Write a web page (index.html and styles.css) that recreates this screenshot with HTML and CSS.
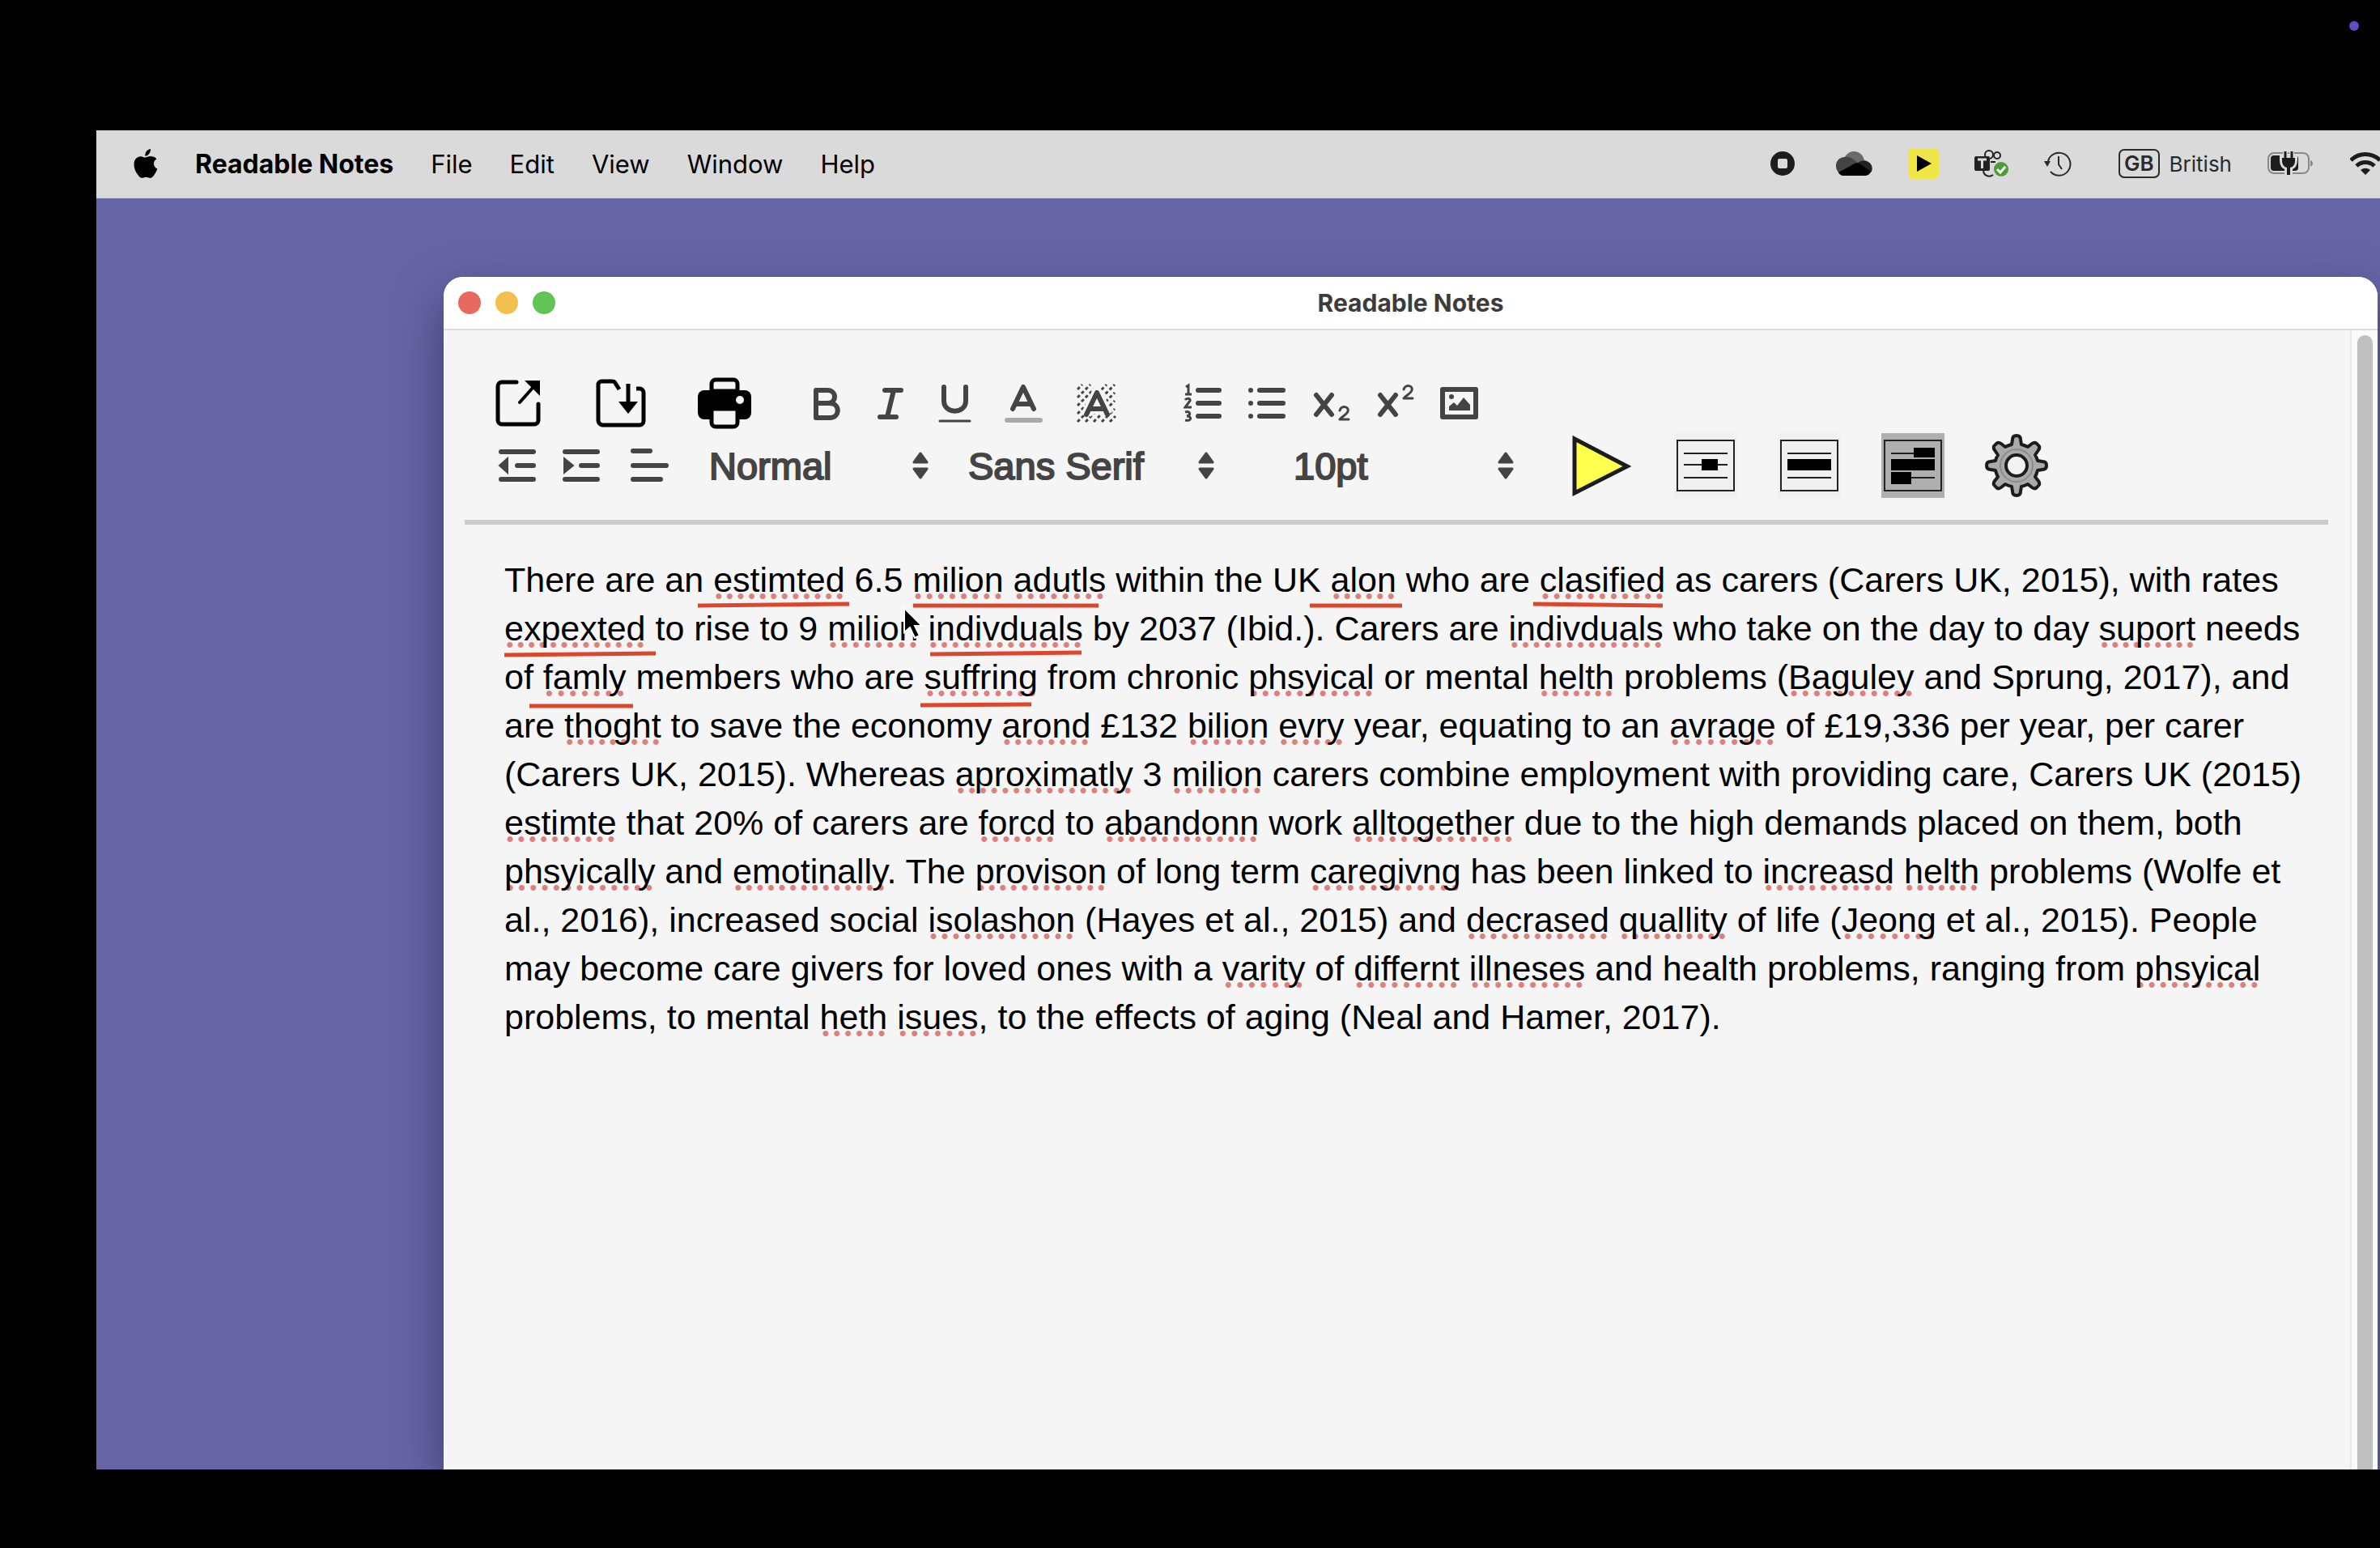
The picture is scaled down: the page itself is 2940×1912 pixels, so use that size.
FILE: index.html
```html
<!DOCTYPE html>
<html lang="en-GB">
<head>
<meta charset="utf-8">
<title>Readable Notes</title>
<link rel="stylesheet" href="styles.css">
</head>
<body>
<header class="stage-top"><span class="presence"></span></header>
<div class="desktop">
  <nav class="menubar" aria-label="Menu bar">
    <button class="apple" aria-label="Apple menu"><svg width="30" height="36" viewBox="0 0 30 36"><path d="M21 0c.3 3-1 5-2.300 6.500C17.300 8 15.600 8.700 14.300 8.500c-.2-2.500.8-4.700 2.200-6.200C17.700 1 19.600.1 21 0zM28.500 12.300c-2.300 1.400-3.500 3.200-3.500 5.900 0 3 1.800 5.200 4.300 6.200-1 3-2.600 6-4.500 8.500-1.400 1.800-2.700 2.900-4.500 2.900-1.900 0-2.500-1.100-4.900-1.100s-3.200 1.100-5 1.100c-2 0-3.400-1.500-4.800-3.500C2.300 28.500.5 23.500.5 19c0-6.300 4-9.800 8.200-9.800 2.300 0 4.200 1.400 5.700 1.400 1.400 0 3.600-1.600 6.400-1.600 3 0 5.800 1 7.700 3.300z"/></svg></button>
    <button class="app-name">Readable Notes</button>
    <button>File</button>
    <button>Edit</button>
    <button>View</button>
    <button>Window</button>
    <button>Help</button>
    <div class="status">
      <svg class="record" width="30" height="30" viewBox="0 0 30 30"><circle cx="15" cy="15" r="15" fill="#1c1c1c"/><rect x="9" y="9" width="12" height="12" rx="2" fill="#dadada"/></svg>
      <svg width="46" height="30" viewBox="0 0 46 30"><path d="M10 14C11 5 16 0 23 0c7 0 11 4 13 11l-14 9z" fill="#6a6a6a"/><path d="M4 26C-2 19 1 8 11 7c6-1 9 1 13 4l5 4-24 12z" fill="#444"/><path d="M28 14c4-3 9-4 13-1 5 3 6 9 3 13l-12-4z" fill="#222"/><path d="M4 26l20-11c2-1 4-1 6 0l14 10c-1 3-4 5-8 5H10c-3 0-5-2-6-4z"/></svg>
      <svg width="38" height="38" viewBox="0 0 38 38"><rect width="38" height="38" rx="6" fill="#f0e646"/><path d="M11 9l18 10-18 10z"/></svg>
      <svg width="42" height="34" viewBox="0 0 42 34"><g fill="none" stroke="#222" stroke-width="2"><circle cx="18" cy="6" r="5"/><circle cx="28" cy="7" r="4"/><path d="M20 15h6M11 26c1 7 8 8 12 5"/></g><rect y="8" width="19" height="18" rx="2" fill="#222"/><path d="M4 12h11M9.500 12v11" stroke="#dadada" stroke-width="3"/><circle cx="33" cy="24" r="9" fill="#4a9e33"/><path d="M28 24l4 4 6-7" fill="none" stroke="#fff" stroke-width="3"/></svg>
      <svg width="34" height="32" viewBox="0 0 34 32"><path d="M5 13A14 14 0 1 1 8 26" fill="none" stroke="#2a2a2a" stroke-width="2"/><path d="M0 13h8l-4 7z" fill="#2a2a2a"/><path d="M18 7v10l4 6" fill="none" stroke="#2a2a2a" stroke-width="2"/></svg>
      <span class="input-source"><span class="code">GB</span>British</span>
      <svg width="58" height="32" viewBox="0 0 58 32"><rect x="1" y="3" width="50" height="25" rx="7" fill="none" stroke="#888" stroke-width="2"/><path d="M53 12c4 1 4 6 0 8z" fill="#888"/><rect x="4" y="6" width="34" height="19" rx="4" fill="#1c1c1c"/><path d="M22 1v8M30 1v8M18 9h16v3c0 5-2 8-6 9v9h-4v-9c-4-1-6-4-6-9z" fill="#1c1c1c" stroke="#dadada" stroke-width="6"/><path d="M22 1v8M30 1v8" stroke="#1c1c1c" stroke-width="3"/><path d="M18 9h16v3c0 5-2 8-6 9v9h-4v-9c-4-1-6-4-6-9z" fill="#1c1c1c"/></svg>
      <svg class="wifi" width="38" height="30" viewBox="0 0 38 30"><g fill="none" stroke="#1c1c1c" stroke-width="5"><path d="M1 11c10-10 26-10 36 0M8 18c6-6 16-6 22 0"/></g><path d="M13 23c4-3 8-3 12 0l-6 6z" fill="#1c1c1c"/></svg>
    </div>
  </nav>

  <main class="window">
    <div class="titlebar">
      <div class="lights">
        <button class="close" aria-label="Close"></button>
        <button class="minimise" aria-label="Minimise"></button>
        <button class="zoom" aria-label="Zoom"></button>
      </div>
      <h1>Readable Notes</h1>
    </div>
    <div class="content">
      <div class="page">
        <div class="toolbar" role="toolbar" aria-label="Formatting">
          <div class="row row-one">
            <button class="file" aria-label="Open"><svg width="56" height="60" viewBox="0 0 56 60"><path d="M26 4H8a5 5 0 0 0-5 5v42a5 5 0 0 0 5 5h40a5 5 0 0 0 5-5V31" fill="none" stroke="#000" stroke-width="5" stroke-linecap="round"/><path d="M30 29L46 11" stroke="#000" stroke-width="4" stroke-linecap="round"/><path d="M36 2h19v19z"/></svg></button>
            <button class="file" aria-label="Save"><svg width="62" height="60" viewBox="0 0 62 60"><path d="M29 13l-5-8c-1-2-2-2-4-2H7a4 4 0 0 0-4 4v44a6 6 0 0 0 5 6h46a5 5 0 0 0 5-5V17a5 5 0 0 0-5-5h-4" fill="none" stroke="#000" stroke-width="5"/><path d="M40 6v26" stroke="#000" stroke-width="5"/><path d="M28 28h24L40 43z"/></svg></button>
            <button class="file" aria-label="Print"><svg width="66" height="64" viewBox="0 0 66 64"><rect y="16" width="66" height="36" rx="8"/><path d="M17 17V8a5 5 0 0 1 5-5h22a5 5 0 0 1 5 5v9z" fill="#f5f5f5" stroke="#000" stroke-width="5"/><path d="M17 39h32v17a5 5 0 0 1-5 5H22a5 5 0 0 1-5-5z" fill="#f5f5f5" stroke="#000" stroke-width="5"/><circle cx="52" cy="28" r="5" fill="#f5f5f5"/></svg></button>
            <div class="group styles">
              <button aria-label="Bold"><svg width="48" height="50" viewBox="0 0 48 50"><path d="M11 9h14c12 0 12 16 0 16H11zM11 25h17c13 0 13 18 0 18H11z" class="line" stroke-width="6"/></svg></button>
              <button aria-label="Italic"><svg width="48" height="50" viewBox="0 0 48 50"><path d="M17 9h20M11 42h20M28 9l-8 33" class="line" stroke-width="6"/></svg></button>
              <button aria-label="Underline"><svg width="48" height="50" viewBox="0 0 48 50"><path d="M11 5v17c0 17 27 17 27 0V5" class="line" stroke-width="6"/><path d="M6 47h37" class="line" stroke-width="3"/></svg></button>
              <button class="colour" aria-label="Text colour"><svg width="48" height="50" viewBox="0 0 48 50"><path d="M11 32L24 5l13 27M15 26h18" class="line" stroke-width="6"/><path d="M4 46h41" class="line" stroke-width="6" stroke="#aaa"/></svg></button>
              <button class="highlight" aria-label="Highlight colour"><svg width="50" height="50" viewBox="0 0 50 50"><path d="M1 8l6-6M1 18L17 2M1 28L27 2M1 38L37 2M1 48L47 2M11 48l36-36M21 48l26-26M31 48l16-16M41 48l7-7" stroke="#444" stroke-width="3" stroke-dasharray="4 3"/><path d="M12 39L25 12l13 27M16 32h18" fill="none" stroke="#f5f5f5" stroke-width="13"/><path d="M12 39L25 12l13 27M16 32h18" class="line" stroke-width="6"/></svg></button>
            </div>
            <div class="group lists">
              <button aria-label="Numbered list"><svg width="48" height="50" viewBox="0 0 48 50"><path d="M18 9h26M18 25h26M18 41h26" class="line" stroke-width="6"/><path d="M3 5l3-2v11M2 14h8M2 21c2-3 7-2 6 1l-6 8h8M2 36c6-2 8 4 2 5 7 0 6 7-2 5" fill="none" stroke="#444" stroke-width="3"/></svg></button>
              <button aria-label="Bulleted list"><svg width="48" height="50" viewBox="0 0 48 50"><path d="M15 9h29M15 25h29M15 41h29" class="line" stroke-width="6"/><g fill="#444"><circle cx="4" cy="9" r="3"/><circle cx="4" cy="25" r="3"/><circle cx="4" cy="41" r="3"/></g></svg></button>
              <button aria-label="Subscript"><svg width="48" height="50" viewBox="0 0 48 50"><path d="M6 15l19 24M25 15L6 39" class="line" stroke-width="6"/><path d="M35 34c2-7 12-5 10 1-1 4-7 6-10 10h11" class="line" stroke-width="3"/></svg></button>
              <button aria-label="Superscript"><svg width="48" height="50" viewBox="0 0 48 50"><path d="M6 15l19 24M25 15L6 39" class="line" stroke-width="6"/><path d="M35 8c2-7 12-5 10 1-1 4-7 6-10 10h11" class="line" stroke-width="3"/></svg></button>
              <button aria-label="Insert image"><svg width="48" height="50" viewBox="0 0 48 50"><rect x="4" y="8" width="41" height="34" class="line" stroke-width="6"/><path d="M12 34v-5l6-5 4 4 8-10 8 9v7z" fill="#444"/><circle cx="15" cy="17" r="3" fill="#444"/></svg></button>
            </div>
          </div>
          <div class="row row-two">
            <div class="group indents">
              <button aria-label="Outdent"><svg width="48" height="44" viewBox="0 0 48 44"><path d="M5 5h40M25 22h20M5 39h40" class="line" stroke-width="6"/><path d="M13 13v18L3 22z" fill="#444" stroke="#444" stroke-width="2"/></svg></button>
              <button aria-label="Indent"><svg width="48" height="44" viewBox="0 0 48 44"><path d="M5 5h40M25 22h20M5 39h40" class="line" stroke-width="6"/><path d="M4 13v18l11-9z" fill="#444" stroke="#444" stroke-width="2"/></svg></button>
              <button class="align" aria-label="Align"><svg width="50" height="44" viewBox="0 0 50 44"><path d="M5 4h21M5 22h41M5 39h34" class="line" stroke-width="6"/></svg></button>
            </div>
            <label class="picker style"><select aria-label="Paragraph style"><option>Normal</option></select><svg width="20" height="34" viewBox="0 0 20 34"><path d="M10 2l8 11H2zM10 32l8-11H2z"/></svg></label>
            <label class="picker font"><select aria-label="Font"><option>Sans Serif</option></select><svg width="20" height="34" viewBox="0 0 20 34"><path d="M10 2l8 11H2zM10 32l8-11H2z"/></svg></label>
            <label class="picker size"><select aria-label="Size"><option>10pt</option></select><svg width="20" height="34" viewBox="0 0 20 34"><path d="M10 2l8 11H2zM10 32l8-11H2z"/></svg></label>
            <div class="group reading">
              <button aria-label="Read aloud"><svg width="78" height="80" viewBox="0 0 78 80"><path d="M5 7l65 34L5 74z" fill="#ffff4d" stroke="#1c1c1c" stroke-width="5"/></svg></button>
              <button aria-label="Highlight word"><svg width="78" height="80" viewBox="0 0 78 80"><path fill="#f0f0f0" d="M0 0h78v80H0z"/><path d="M4 9h70v62H4zM12 25h54M12 39h54M12 55h54" fill="none" stroke="#222" stroke-width="2"/><path d="M34 32h20v14H34z"/></svg></button>
              <button aria-label="Highlight line"><svg width="78" height="80" viewBox="0 0 78 80"><path fill="#f0f0f0" d="M0 0h78v80H0z"/><path d="M4 9h70v62H4zM12 25h54M12 55h54" fill="none" stroke="#222" stroke-width="2"/><path d="M12 32h54v14H12z"/></svg></button>
              <button aria-label="Highlight sentence" aria-pressed="true"><svg width="78" height="80" viewBox="0 0 78 80"><path fill="#afafaf" d="M0 0h78v80H0z"/><path d="M4 9h70v62H4zM12 25h54M12 55h54" fill="none" stroke="#222" stroke-width="2"/><path d="M40 18h26v12H40zM12 32h54v14H12zM12 48h25v15H12z"/></svg></button>
              <button aria-label="Settings"><svg width="78" height="80" viewBox="0 0 78 80"><path d="M34 8q0-5 5-5t5 5l1 6q4 1 8 3l5-4q4-3 7 1 4 3 1 7l-4 6q2 3 3 7l6 1q5 0 5 5t-5 5l-6 1q-1 4-3 8l4 5q3 4-1 7-3 4-7 1l-5-4q-4 2-8 3l-1 6q0 5-5 5t-5-5l-1-6q-4-1-8-3l-5 4q-4 3-7-1-4-3-1-7l4-5q-2-4-3-8l-6-1q-5 0-5-5t5-5l6-1q1-4 3-7l-4-6q-3-4 1-7 3-4 7-1l5 4q4-2 8-3z" fill="#aaa" stroke="#1c1c1c" stroke-width="4" stroke-linejoin="round"/><circle cx="39" cy="40" r="20" fill="none" stroke="#8c8c8c" stroke-width="2"/><circle cx="39" cy="40" r="13" fill="#f2f2f2" stroke="#1c1c1c" stroke-width="4"/></svg></button>
            </div>
          </div>
        </div>
        <div class="editor">
          <p>There are an <span class="typo">estimted</span> 6.5 <span class="typo">milion</span> <span class="typo">adutls</span> within the UK <span class="typo">alon</span> who are <span class="typo">clasified</span> as carers (Carers UK, 2015), with rates <span class="typo">expexted</span> to rise to 9 <span class="typo">milion</span> <span class="typo">indivduals</span> by 2037 (Ibid.). Carers are <span class="typo">indivduals</span> who take on the day to day <span class="typo">suport</span> needs of <span class="typo">famly</span> members who are <span class="typo">suffring</span> from chronic <span class="typo">phsyical</span> or mental <span class="typo">helth</span> problems (<span class="typo">Baguley</span> and Sprung, 2017), and are <span class="typo">thoght</span> to save the economy <span class="typo">arond</span> £132 <span class="typo">bilion</span> <span class="typo">evry</span> year, equating to an <span class="typo">avrage</span> of £19,336 per year, per carer (Carers UK, 2015). Whereas <span class="typo">aproximatly</span> 3 <span class="typo">milion</span> carers combine employment with providing care, Carers UK (2015) <span class="typo">estimte</span> that 20% of carers are <span class="typo">forcd</span> to <span class="typo">abandonn</span> work <span class="typo">alltogether</span> due to the high demands placed on them, both <span class="typo">phsyically</span> and <span class="typo">emotinally</span>. The <span class="typo">provison</span> of long term <span class="typo">caregivng</span> has been linked to <span class="typo">increasd</span> <span class="typo">helth</span> problems (Wolfe et al., 2016), increased social <span class="typo">isolashon</span> (Hayes et al., 2015) and <span class="typo">decrased</span> <span class="typo">quallity</span> of life (<span class="typo">Jeong</span> et al., 2015). People may become care givers for loved ones with a <span class="typo">varity</span> of <span class="typo">differnt</span> <span class="typo">illneses</span> and health problems, ranging from <span class="typo">phsyical</span> problems, to mental <span class="typo">heth</span> <span class="typo">isues</span>, to the effects of aging (Neal and Hamer, 2017).</p>
          <svg class="pen" width="2200" height="200" viewBox="623 686 2200 200" aria-hidden="true">
            <path d="M862 748L1049 746M1128 748H1357M1618 748H1732M1894 746L2054 748M623 809L810 807M1149 808L1336 806M654 872H782M1137 871L1274 870" fill="none" stroke="#da472d" stroke-width="5"/>
            <path d="M1117 751v30l7-6 6 13 6-3-6-12h9z" fill="#000" stroke="#fff" stroke-width="2"/>
          </svg>
        </div>
      </div>
      <div class="scrollbar"><div class="thumb"></div></div>
    </div>
  </main>
</div>
</body>
</html>
```
FILE: styles.css
```css
* { box-sizing: border-box; }

body {
  margin: 0;
  min-height: 100vh;
  display: flex;
  flex-direction: column;
  padding: 0 0 97px 119px;
  background: #000;
  color: #000;
  font-family: Inter, "Liberation Sans", sans-serif;
}

button {
  padding: 0;
  border: 0;
  background: none;
  color: inherit;
  font: inherit;
}

svg { display: block; flex: none; }

.stage-top {
  height: 161px;
  display: flex;
  justify-content: flex-end;
  padding: 26px 26px;
}

.presence {
  width: 12px;
  height: 12px;
  border-radius: 50%;
  background: #5a50c4;
}

.desktop {
  flex: 1;
  display: flex;
  flex-direction: column;
  overflow: hidden;
  background: #6865a6;
}

/* Menu bar */
.menubar {
  height: 84px;
  flex: none;
  display: flex;
  align-items: center;
  gap: 46px;
  padding-left: 46px;
  border-bottom: 2px solid #cfcfee;
  background: #dadada;
  font-size: 31px;
  white-space: nowrap;
}

.app-name {
  font-size: 32px;
  font-weight: 700;
}

.status {
  display: flex;
  align-items: center;
  gap: 44px;
  margin-left: auto;
  color: #2a2a2a;
  font-size: 26px;
}

.record { margin-right: 6px; }

.input-source {
  display: flex;
  align-items: center;
  gap: 12px;
  margin-left: 14px;
}

.code {
  padding: 0 5px;
  border: 2px solid #2a2a2a;
  border-radius: 7px;
  font-weight: 600;
  line-height: 32px;
}

.wifi { margin-right: -1px; }

/* Window */
.window {
  flex: 1;
  display: flex;
  flex-direction: column;
  margin: 97px 3px 0 429px;
  border-radius: 24px 24px 0 0;
  background: #f5f5f5;
  box-shadow: 0 24px 60px rgba(30, 30, 70, 0.6);
}

.titlebar {
  height: 66px;
  display: grid;
  grid-template-columns: 1fr auto 1fr;
  align-items: center;
  padding: 0 18px;
  border-bottom: 2px solid #dcdcdc;
  border-radius: 24px 24px 0 0;
  background: #fff;
}

.lights { display: flex; gap: 18px; }

.lights button {
  width: 28px;
  height: 28px;
  border-radius: 50%;
}

.close { background: #e9695e; }
.minimise { background: #f3bf4f; }
.zoom { background: #61c454; }

h1 {
  margin: 0;
  color: #3c3c3c;
  font-size: 30px;
  font-weight: 700;
  line-height: 32px;
}

.content { flex: 1; display: flex; }
.page { flex: 1; padding: 0 27px 0 26px; }

.scrollbar {
  width: 34px;
  display: flex;
  padding: 6px 6px 0 7px;
  border-left: 2px solid #e8e8e8;
  background: #fafafa;
}

.thumb {
  flex: 1;
  border-radius: 10px 10px 0 0;
  background: #c0c0c0;
}

/* Toolbar */
.toolbar {
  padding: 56px 0 24px 36px;
  border-bottom: 6px solid #cbcbcb;
}

.row, .group, .picker { display: flex; align-items: center; }
.row-one { height: 68px; }
.row-two { height: 86px; }

.file { width: 60px; margin-right: 66px; }
.file svg { margin: 0 auto; }

.styles { gap: 31px; margin-left: 9px; }
.colour { margin-left: 6px; }
.highlight { margin-left: 11px; }
.lists { gap: 31px; margin-left: 82px; }
.indents { gap: 31px; margin-left: 4px; }
.align { margin-left: 5px; }

.line {
  fill: none;
  stroke-linecap: round;
  stroke-linejoin: round;
}

.line:not([stroke]) { stroke: #444; }

.picker {
  justify-content: space-between;
  color: #444;
  font-family: "Liberation Sans", Arial, sans-serif;
  font-size: 47px;
}

.picker select {
  appearance: none;
  flex: 1;
  padding: 0;
  border: 0;
  background: none;
  color: inherit;
  font: inherit;
  -webkit-text-stroke: 2px #444;
}

.picker svg {
  fill: #444;
  stroke: #444;
  stroke-width: 3;
  stroke-linejoin: round;
}

.style { width: 271px; margin-left: 49px; }
.font { width: 304px; margin-left: 49px; }
.size { width: 272px; margin-left: 98px; }
.reading { gap: 50px; margin-left: 70px; }

/* Note text */
.editor {
  position: relative;
  padding: 38px 0 0 49px;
  font-family: "Liberation Sans", Arial, sans-serif;
  font-size: 43px;
  line-height: 60px;
}

.editor p { margin: 0; }

.typo {
  background: radial-gradient(circle, #dd7f7b 3px, transparent 4px) left bottom / 14px 7px;
  background-repeat: round no-repeat;
}

.pen {
  position: absolute;
  top: 38px;
  left: 49px;
}
```
